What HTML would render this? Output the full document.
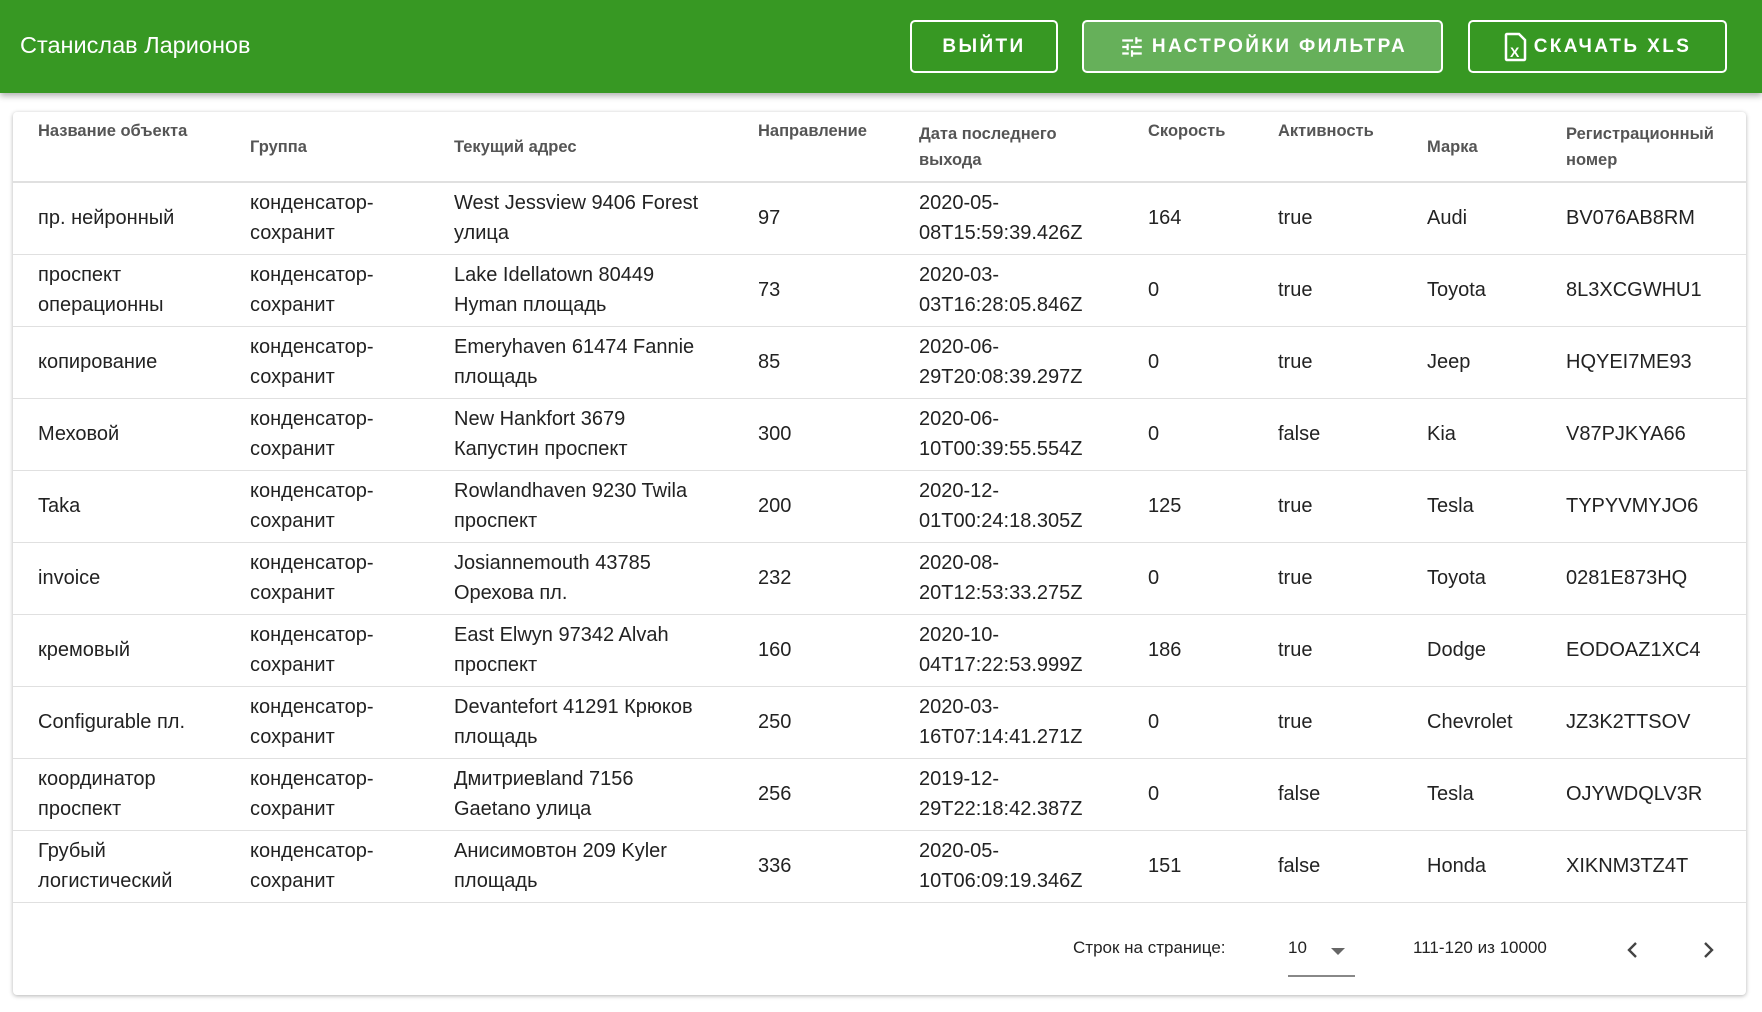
<!DOCTYPE html>
<html><head><meta charset="utf-8"><style>
*{box-sizing:border-box;margin:0;padding:0}
body{width:1762px;height:1012px;background:#fff;font-family:"Liberation Sans","DejaVu Sans",sans-serif;position:relative;overflow:hidden}
.hdr{position:absolute;left:0;top:0;width:1762px;height:93px;background:#379823;box-shadow:0 3px 6px rgba(0,0,0,.3)}
.name{position:absolute;left:20px;top:32px;color:#fff;font-size:23.5px}
.btn{position:absolute;top:20px;height:53px;border:2px solid #fff;border-radius:5px;color:#fff;font-size:19px;font-weight:bold;letter-spacing:2.4px;display:flex;align-items:center;justify-content:center;gap:6px}
.card{position:absolute;left:13px;top:112px;width:1733px;height:883px;background:#fff;border-radius:4px;box-shadow:0 1px 4px rgba(0,0,0,.3)}
table{border-collapse:collapse;width:1733px;table-layout:fixed}
th{height:70px;text-align:left;vertical-align:middle;font-size:16.5px;font-weight:bold;color:#555;line-height:26px;padding:0 0 0 25px;border-bottom:2px solid #e0e0e0}
td{height:72px;font-size:20px;color:#222;line-height:30px;padding:0 0 0 25px;border-bottom:1px solid #e0e0e0;vertical-align:middle}
td:nth-child(3){padding-right:26px}
.ft{position:absolute;top:793px;left:0;width:1733px;height:90px;font-size:17px;color:#222}
.ft span{position:absolute;top:33px}
</style></head><body>
<div class="hdr">
<div class="name">Станислав Ларионов</div>
<div class="btn" style="left:910px;width:148px">ВЫЙТИ</div>
<div class="btn" style="left:1082px;width:361px;background:#66b05a"><svg width="28" height="26" viewBox="0 0 24 24" fill="#fff"><path d="M3 17v2h6v-2H3zM3 5v2h10V5H3zm10 16v-2h8v-2h-8v-2h-2v6h2zM7 9v2H3v2h4v2h2V9H7zm14 4v-2H11v2h10zm-6-4h2V7h4V5h-4V3h-2v6z"/></svg>НАСТРОЙКИ ФИЛЬТРА</div>
<div class="btn" style="left:1468px;width:259px"><svg width="24" height="30" viewBox="0 0 24 30"><path d="M3 2h12l6 6v19a1 1 0 0 1-1 1H3a1 1 0 0 1-1-1V3a1 1 0 0 1 1-1z" fill="none" stroke="#fff" stroke-width="2.5"/><text x="6" y="25" fill="#fff" font-size="14" font-family="Liberation Sans">X</text></svg>СКАЧАТЬ XLS</div>
</div>
<div class="card">
<table>
<colgroup><col style="width:212px"><col style="width:204px"><col style="width:304px"><col style="width:161px"><col style="width:229px"><col style="width:130px"><col style="width:149px"><col style="width:139px"><col></colgroup>
<tr><th style="vertical-align:top;padding-top:6px">Название объекта</th><th>Группа</th><th>Текущий адрес</th><th style="vertical-align:top;padding-top:6px">Направление</th><th>Дата последнего выхода</th><th style="vertical-align:top;padding-top:6px">Скорость</th><th style="vertical-align:top;padding-top:6px">Активность</th><th>Марка</th><th>Регистрационный номер</th></tr>
<tr><td>пр. нейронный</td><td>конденсатор-сохранит</td><td>West Jessview 9406 Forest улица</td><td>97</td><td>2020-05-08T15:59:39.426Z</td><td>164</td><td>true</td><td>Audi</td><td>BV076AB8RM</td></tr>
<tr><td>проспект операционны</td><td>конденсатор-сохранит</td><td>Lake Idellatown 80449 Hyman площадь</td><td>73</td><td>2020-03-03T16:28:05.846Z</td><td>0</td><td>true</td><td>Toyota</td><td>8L3XCGWHU1</td></tr>
<tr><td>копирование</td><td>конденсатор-сохранит</td><td>Emeryhaven 61474 Fannie площадь</td><td>85</td><td>2020-06-29T20:08:39.297Z</td><td>0</td><td>true</td><td>Jeep</td><td>HQYEI7ME93</td></tr>
<tr><td>Меховой</td><td>конденсатор-сохранит</td><td>New Hankfort 3679 Капустин проспект</td><td>300</td><td>2020-06-10T00:39:55.554Z</td><td>0</td><td>false</td><td>Kia</td><td>V87PJKYA66</td></tr>
<tr><td>Taka</td><td>конденсатор-сохранит</td><td>Rowlandhaven 9230 Twila проспект</td><td>200</td><td>2020-12-01T00:24:18.305Z</td><td>125</td><td>true</td><td>Tesla</td><td>TYPYVMYJO6</td></tr>
<tr><td>invoice</td><td>конденсатор-сохранит</td><td>Josiannemouth 43785 Орехова пл.</td><td>232</td><td>2020-08-20T12:53:33.275Z</td><td>0</td><td>true</td><td>Toyota</td><td>0281E873HQ</td></tr>
<tr><td>кремовый</td><td>конденсатор-сохранит</td><td>East Elwyn 97342 Alvah проспект</td><td>160</td><td>2020-10-04T17:22:53.999Z</td><td>186</td><td>true</td><td>Dodge</td><td>EODOAZ1XC4</td></tr>
<tr><td>Configurable пл.</td><td>конденсатор-сохранит</td><td>Devantefort 41291 Крюков площадь</td><td>250</td><td>2020-03-16T07:14:41.271Z</td><td>0</td><td>true</td><td>Chevrolet</td><td>JZ3K2TTSOV</td></tr>
<tr><td>координатор проспект</td><td>конденсатор-сохранит</td><td>Дмитриевland 7156 Gaetano улица</td><td>256</td><td>2019-12-29T22:18:42.387Z</td><td>0</td><td>false</td><td>Tesla</td><td>OJYWDQLV3R</td></tr>
<tr><td>Грубый логистический</td><td>конденсатор-сохранит</td><td>Анисимовтон 209 Kyler площадь</td><td>336</td><td>2020-05-10T06:09:19.346Z</td><td>151</td><td>false</td><td>Honda</td><td>XIKNM3TZ4T</td></tr>
</table>
<div class="ft">
<span style="left:1060px">Строк на странице:</span>
<span style="left:1275px">10</span>
<span style="left:1318px;top:43px;width:0;height:0;border-left:7px solid transparent;border-right:7px solid transparent;border-top:7px solid #666"></span>
<span style="left:1275px;top:70px;width:67px;height:2px;background:#888"></span>
<span style="left:1400px">111-120 из 10000</span>
<svg style="position:absolute;left:1610px;top:33px" width="20" height="24" viewBox="0 0 20 24"><path d="M13 5l-7 7 7 7" fill="none" stroke="#444" stroke-width="2.4"/></svg>
<svg style="position:absolute;left:1685px;top:33px" width="20" height="24" viewBox="0 0 20 24"><path d="M7 5l7 7-7 7" fill="none" stroke="#444" stroke-width="2.4"/></svg>
</div>
</div>
</body></html>
